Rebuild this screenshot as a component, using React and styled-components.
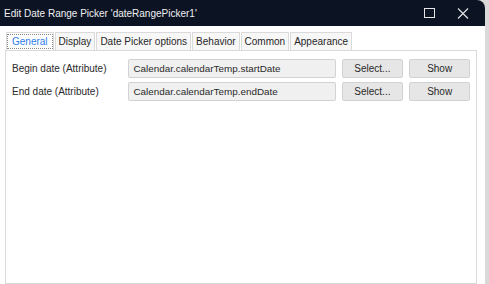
import React from 'react';
import styled, { createGlobalStyle } from 'styled-components';

const GlobalStyle = createGlobalStyle`
  html, body {
    margin: 0;
    padding: 0;
    background: #d9d9d9;
    font-family: "Liberation Sans", "Noto Sans CJK KR", sans-serif;
  }
`;

const tabs = ['General', 'Display', 'Date Picker options', 'Behavior', 'Common', 'Appearance'];

const rows = [
  { label: 'Begin date (Attribute)', value: 'Calendar.calendarTemp.startDate' },
  { label: 'End date (Attribute)', value: 'Calendar.calendarTemp.endDate' },
];

function App() {
  return (
    <>
      <GlobalStyle />
      <Screen>
        <Window>
          <TitleBar>
            <Title>Edit Date Range Picker 'dateRangePicker1'</Title>
            <TitleButtons>
              <TitleButton $width={32}>
                <svg width="11" height="10" viewBox="0 0 11 10">
                  <rect x="0.5" y="0.5" width="10" height="9" fill="none" stroke="#e6e6e6" strokeWidth="1" />
                </svg>
              </TitleButton>
              <TitleButton $width={36}>
                <svg width="12" height="11" viewBox="0 0 12 11">
                  <path d="M1 0.5 L11 10.5 M11 0.5 L1 10.5" stroke="#e6e6e6" strokeWidth="1.1" />
                </svg>
              </TitleButton>
            </TitleButtons>
          </TitleBar>
          <Body>
            <TabStrip>
              {tabs.map((t, i) => (
                <Tab key={t} $active={i === 0}>
                  {i === 0 ? <Focus>{t}</Focus> : t}
                </Tab>
              ))}
            </TabStrip>
            <Panel>
              {rows.map((r) => (
                <Row key={r.label}>
                  <Label>{r.label}</Label>
                  <Input>{r.value}</Input>
                  <Button $width={62}>Select...</Button>
                  <Button $width={61}>Show</Button>
                </Row>
              ))}
            </Panel>
          </Body>
        </Window>
      </Screen>
    </>
  );
}

export default App;

const Screen = styled.div`
  width: 489px;
  height: 284px;
  overflow: hidden;
  display: flex;
`;

const Window = styled.div`
  width: 485px;
  height: 284px;
  background: #ffffff;
  border-top-right-radius: 8px;
  display: flex;
  flex-direction: column;
  overflow: hidden;
`;

const TitleBar = styled.div`
  height: 26px;
  flex: none;
  background: #0c1424;
  display: flex;
  align-items: center;
  justify-content: space-between;
  padding-left: 4px;
`;

const Title = styled.div`
  color: #f0f0f0;
  font-size: 10px;
`;

const TitleButtons = styled.div`
  display: flex;
  align-items: center;
  margin-right: 4px;
`;

const TitleButton = styled.div`
  width: ${(p) => p.$width}px;
  height: 26px;
  display: flex;
  align-items: center;
  justify-content: center;
`;

const Body = styled.div`
  flex: 1;
  padding: 6px 8px 0 5px;
  display: flex;
  flex-direction: column;
`;

const TabStrip = styled.div`
  display: flex;
  align-items: flex-end;
  gap: 1px;
  padding-left: 1px;
  height: 18px;
`;

const Tab = styled.div`
  height: 17px;
  padding: ${(p) => (p.$active ? '0' : '0 3px')};
  border: 1px solid #dadada;
  border-bottom: none;
  background: ${(p) => (p.$active ? '#ffffff' : '#f7f7f7')};
  color: ${(p) => (p.$active ? '#2b7de9' : '#262626')};
  font-size: 10px;
  line-height: 17px;
  white-space: nowrap;
  display: flex;
  align-items: center;
`;

const Focus = styled.span`
  border: 1px dotted #888;
  line-height: 13px;
  padding: 0 4px;
`;

const Panel = styled.div`
  flex: 1;
  border: 1px solid #dadada;
  padding: 8px 0 0 6px;
  display: flex;
  flex-direction: column;
  gap: 4px;
`;

const Row = styled.div`
  display: flex;
  align-items: center;
  height: 19px;
`;

const Label = styled.div`
  width: 117px;
  font-size: 10px;
  color: #2a2a2a;
  white-space: nowrap;
`;

const Input = styled.div`
  width: 202px;
  height: 17px;
  border: 1px solid #d2d2d2;
  border-radius: 2px;
  background: #f0f0f0;
  font-size: 9.9px;
  color: #2a2a2a;
  line-height: 17px;
  padding-left: 4px;
  margin-right: 6px;
  white-space: nowrap;
  overflow: hidden;
`;

const Button = styled.div`
  width: ${(p) => p.$width - 2}px;
  height: 17px;
  border: 1px solid #d2d2d2;
  border-radius: 2px;
  background: #e6e6e6;
  font-size: 10px;
  color: #2a2a2a;
  line-height: 17px;
  text-align: center;
  margin-right: 6px;
`;
